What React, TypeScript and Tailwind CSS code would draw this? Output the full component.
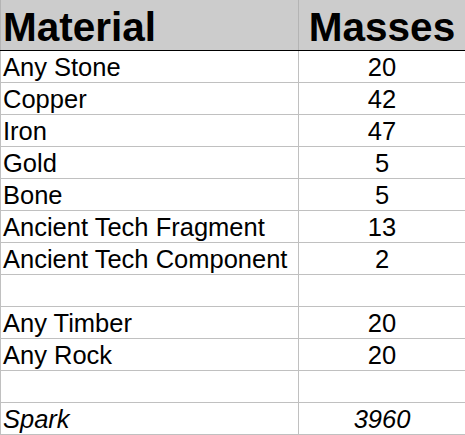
const rows: { name: string; mass: string; italic?: boolean }[] = [
  { name: "Any Stone", mass: "20" },
  { name: "Copper", mass: "42" },
  { name: "Iron", mass: "47" },
  { name: "Gold", mass: "5" },
  { name: "Bone", mass: "5" },
  { name: "Ancient Tech Fragment", mass: "13" },
  { name: "Ancient Tech Component", mass: "2" },
  { name: "", mass: "" },
  { name: "Any Timber", mass: "20" },
  { name: "Any Rock", mass: "20" },
  { name: "", mass: "" },
  { name: "Spark", mass: "3960", italic: true },
];

export default function App() {
  return (
    <div className="w-[465px] h-[435px] overflow-hidden bg-white text-black font-['Liberation_Sans',Arial,sans-serif]">
      {/* header */}
      <div className="flex h-[51px] bg-[#cccccc] border-b border-black">
        <div className="w-[299px] border-l border-r border-[#b4b4b4] pl-[2px] pt-[2px] text-[40.5px] leading-[50px] font-bold">
          Material
        </div>
        <div className="flex-1 text-center pt-[2px] text-[40.5px] leading-[50px] font-bold">
          Masses
        </div>
      </div>

      {rows.map((r, i) => (
        <div key={i} className={`flex h-[32px] border-b border-[#c0c0c0] text-[25.5px] leading-[31px] ${r.italic ? "italic" : ""}`}>
          <div className="w-[299px] border-l border-r border-[#c0c0c0] pl-[2px] pt-px whitespace-nowrap">
            {r.name}
          </div>
          <div className="flex-1 text-center pt-px">{r.mass}</div>
        </div>
      ))}
    </div>
  );
}
